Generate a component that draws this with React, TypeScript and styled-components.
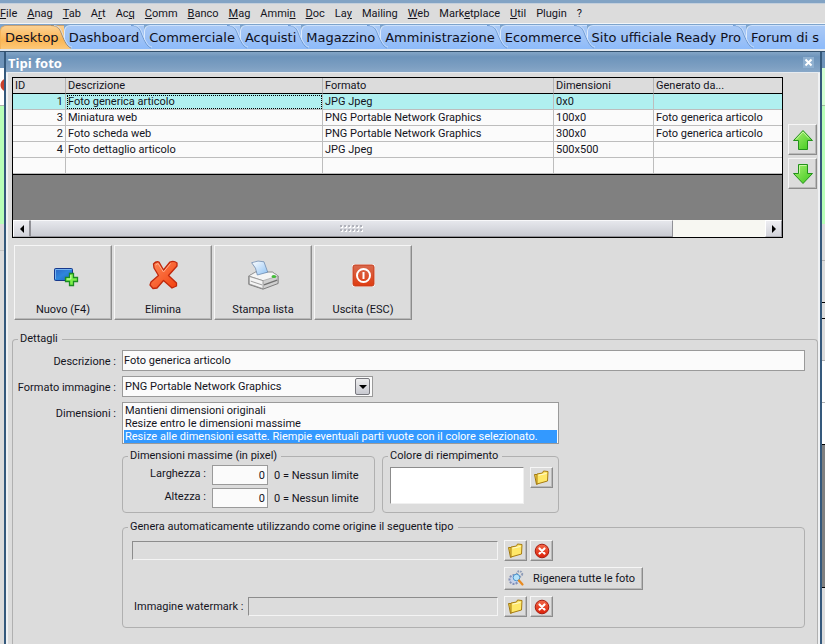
import React from 'react';
import styled, { createGlobalStyle, css } from 'styled-components';

const UI_FONT = 'Roboto, "Noto Sans", sans-serif';
const FACE = '#dcdcdc';

const GlobalStyle = createGlobalStyle`
  *, *::before, *::after { box-sizing: border-box; }
  html, body, #root { height: 100%; }
  body {
    margin: 0;
    overflow: hidden;
    background: ${FACE};
    color: #14141c;
    font: 11px/14px ${UI_FONT};
  }
  button, input, select { font: inherit; color: inherit; border-radius: 0; }
`;

const Page = styled.div`
  display: flex;
  flex-direction: column;
  min-height: 100vh;
  height: 100%;
`;

const TopStrip = styled.div`
  flex: none;
  height: 4px;
  background: #82a3c4;
  border-bottom: 1px solid #c3cfdc;
`;

const MenuBar = styled.nav`
  flex: none;
  display: flex;
  gap: 10px;
  height: 20px;
  background: ${FACE};
  border-bottom: 1px solid #f2f5f8;
  overflow: hidden;
`;

const MenuItem = styled.button`
  flex: none;
  padding: 0;
  border: 0;
  background: none;
  line-height: 20px;
  white-space: nowrap;
  u { text-underline-offset: 1px; }
`;

const TabBar = styled.div`
  flex: none;
  display: flex;
  height: 25px;
  padding-top: 1px;
  background: linear-gradient(#7da3cb, #9dbde0);
  overflow: hidden;
`;

const TabButton = styled.button<{ $active?: boolean }>`
  position: relative;
  flex: none;
  height: 24px;
  margin: 0;
  padding: 0 5px 0 4px;
  border: 0;
  border-top: 1px solid ${p => (p.$active ? '#c9a070' : '#cfe2fb')};
  border-left: 1px solid ${p => (p.$active ? '#f5b45a' : '#dbe9fb')};
  border-top-left-radius: 6px;
  background: ${p =>
    p.$active
      ? 'linear-gradient(#fcd193, #fbb654 60%, #fdc878)'
      : 'linear-gradient(#a9c9f6, #9cc1f6 50%, #8dbbfb)'};
  color: #101020;
  font: 13px/22px "DejaVu Sans", sans-serif;
  text-align: left;
  white-space: nowrap;
  &:last-child { flex: 1 0 auto; }
`;

const TabSlope = styled.svg`
  position: absolute;
  z-index: 1;
  top: -1px;
  left: calc(100% - 13px);
  width: 22px;
  height: 24px;
  pointer-events: none;
`;

const TabLabel = styled.span`
  position: relative;
  z-index: 2;
`;

const Rule = styled.div`
  flex: none;
  height: 3px;
  background: #dfe6ee;
  border-bottom: 1px solid #33506c;
`;

const Workspace = styled.main`
  flex: 1;
  min-height: 0;
  display: flex;
`;

const EdgeColumn = styled.div<{ $width: number }>`
  flex: none;
  width: ${p => p.$width}px;
  display: flex;
  flex-direction: column;
  overflow: hidden;
`;

const EdgeBlock = styled.div<{ $h?: number; $bg: string; $line?: string }>`
  ${p => (p.$h ? css`flex: none; height: ${p.$h}px;` : css`flex: 1;`)}
  background: ${p => p.$bg};
  border-bottom: ${p => (p.$line ? `1px solid ${p.$line}` : '0')};
`;

const Frame = styled.section`
  flex: 1;
  min-width: 0;
  display: flex;
  flex-direction: column;
  border: solid #35597c;
  border-width: 0 2px;
`;

const TitleBar = styled.header`
  flex: none;
  display: flex;
  align-items: center;
  justify-content: space-between;
  height: 21px;
  padding: 0 6px 0 2px;
  background: linear-gradient(#84a5c6, #6d94bb 25%, #7d9fc2 75%, #88a8c8);
  border-bottom: 1px solid #e6ebf0;
`;

const Title = styled.h1`
  margin: 0;
  padding-top: 2px;
  color: #fff;
  font: bold 13px/20px "Open Sans", "Noto Sans", sans-serif;
`;

const CloseButton = styled.button`
  display: grid;
  place-items: center;
  width: 11px;
  height: 11px;
  padding: 0;
  border: 0;
  background: #8fb0d0;
`;

const Body = styled.div`
  flex: 1;
  min-height: 0;
  display: flex;
  flex-direction: column;
  padding: 4px 0 0 4px;
  background: ${FACE};
  border: solid #f0f2f4;
  border-width: 0 2px;
`;

const GridRow = styled.div`
  flex: none;
  display: flex;
  gap: 5px;
  padding-right: 1px;
`;

const GridBox = styled.div`
  flex: 1;
  min-width: 0;
  border: 1px solid #000;
  background: #808080;
`;

const Table = styled.table`
  width: 100%;
  table-layout: fixed;
  border-collapse: separate;
  border-spacing: 0;
  background: #fbfbfb;
  border-bottom: 1px solid #000;
  margin-bottom: 45px;
`;

const Col = styled.col<{ $w?: number }>`
  width: ${p => (p.$w ? `${p.$w}px` : 'auto')};
`;

const Th = styled.th`
  height: 16px;
  padding: 0 2px;
  background: ${FACE};
  border-right: 1px solid #b4b4b4;
  border-bottom: 1px solid #000;
  font-weight: normal;
  text-align: left;
  line-height: 15px;
  &:last-child { border-right: 0; }
`;

const Td = styled.td<{ $right?: boolean; $focus?: boolean }>`
  height: 16px;
  padding: 0 2px;
  border-right: 1px solid #bdbdbd;
  border-bottom: 1px solid #bdbdbd;
  text-align: ${p => (p.$right ? 'right' : 'left')};
  line-height: 15px;
  white-space: nowrap;
  overflow: hidden;
  ${p => p.$focus && css`outline: 1px dotted #000; outline-offset: -2px;`}
  &:last-child { border-right: 0; }
`;

const Tr = styled.tr<{ $selected?: boolean }>`
  background: ${p => (p.$selected ? '#b0f0f0' : '#fbfbfb')};
`;

const ScrollBar = styled.div`
  display: flex;
  height: 17px;
  background: #f7f7f2;
`;

const ScrollButton = styled.button`
  flex: none;
  display: grid;
  place-items: center;
  width: 17px;
  height: 17px;
  padding: 0;
  border: 1px solid #a8a8b0;
  border-color: #fff #909096 #b0b0b6 #fff;
  background: linear-gradient(#eeeef2, #d2d3da);
`;

const ScrollThumb = styled.div`
  flex: 7 1 0;
  display: grid;
  place-items: center;
  border: 1px solid #909096;
  border-top-color: #f8f8fa;
  background: linear-gradient(#e6e7ec, #c9cbd2);
`;

const ScrollTrack = styled.div`
  flex: 1 1 0;
`;

const ArrowColumn = styled.div`
  flex: none;
  display: flex;
  flex-direction: column;
  gap: 3px;
  padding-top: 47px;
`;

const raised = css`
  border: 1px solid;
  border-color: #f6f6f6 #8c8c8c #8c8c8c #f6f6f6;
  background: ${FACE};
  box-shadow: inset -1px -1px 0 #b9b9b9;
`;

const ArrowButton = styled.button`
  ${raised}
  display: grid;
  place-items: center;
  width: 29px;
  height: 31px;
  padding: 0;
`;

const ActionRow = styled.div`
  flex: none;
  display: flex;
  gap: 2px;
  padding: 7px 0 12px 2px;
`;

const ActionButton = styled.button`
  ${raised}
  display: flex;
  flex-direction: column;
  align-items: center;
  justify-content: space-between;
  width: 98px;
  height: 75px;
  padding: 12px 0 2px;
`;

const Group = styled.fieldset`
  margin: 0;
  min-width: 0;
  padding: 0;
  border: 1px solid #b0b0b0;
  border-radius: 4px;
`;

const Legend = styled.legend`
  margin-left: 5px;
  padding: 0 4px 0 2px;
  height: 14px;
  line-height: 14px;
`;

const Details = styled(Group)`
  flex: 1;
  border-bottom: 0;
  border-radius: 4px 4px 0 0;
`;

const DetailsGrid = styled.div`
  display: grid;
  grid-template-columns: 103px minmax(0, 1fr);
  column-gap: 6px;
  row-gap: 5px;
  padding: 4px 12px 0 0;
`;

const FieldLabel = styled.label`
  padding-top: 5px;
  height: 21px;
  text-align: right;
  white-space: nowrap;
`;

const TextInput = styled.input`
  width: 100%;
  height: 21px;
  padding: 0 1px;
  border: 1px solid #9a9a9a;
  background: #fbfbfb;
  outline: 0;
`;

const SelectWrap = styled.div`
  display: grid;
  grid-template-columns: 1fr 17px;
  align-items: center;
  width: 251px;
  border: 1px solid #9a9a9a;
  background: #fbfbfb;
`;

const Select = styled.select`
  grid-area: 1 / 1 / 2 / 3;
  width: 100%;
  height: 19px;
  padding: 0 18px 0 2px;
  border: 0;
  background: none;
  appearance: none;
  outline: 0;
`;

const DropMark = styled.span`
  grid-area: 1 / 2;
  display: grid;
  place-items: center;
  width: 15px;
  height: 17px;
  border: 1px solid #77777d;
  border-radius: 2px;
  background: linear-gradient(#eeeeef, #c8c9d0);
  pointer-events: none;
`;

const ListBox = styled.select`
  display: block;
  width: 437px;
  height: 42px;
  padding: 1px;
  border: 1px solid #9a9a9a;
  background: #fbfbfb;
  outline: 0;
  overflow: hidden;
  option {
    min-height: 13px;
    height: 13px;
    padding: 0 1px;
    line-height: 13px;
  }
  option:checked {
    background: #3399ff linear-gradient(#3399ff, #3399ff);
    -webkit-text-fill-color: #fff;
  }
`;

const Nested = styled.div`
  grid-column: 2;
  display: flex;
  gap: 7px;
`;

const SizeGroup = styled(Group)`
  width: 253px;
  height: 64px;
`;

const FillGroup = styled(Group)`
  width: 177px;
  height: 64px;
`;

const SizeGrid = styled.div`
  display: grid;
  grid-template-columns: 83px 56px 1fr;
  column-gap: 6px;
  row-gap: 3px;
  padding-top: 2px;
`;

const SizeLabel = styled.label`
  text-align: right;
  line-height: 18px;
`;

const SizeInput = styled(TextInput)`
  height: 20px;
  padding: 0 2px;
  text-align: right;
`;

const Hint = styled.span`
  padding-top: 2px;
  line-height: 18px;
  white-space: nowrap;
`;

const FillRow = styled.div`
  display: flex;
  gap: 6px;
  padding: 4px 0 0 7px;
`;

const Swatch = styled.div`
  width: 134px;
  height: 37px;
  border: 1px solid;
  border-color: #8c8c8c #f0f0f0 #f0f0f0 #8c8c8c;
  background: #fff;
`;

const SmallButton = styled.button`
  ${raised}
  flex: none;
  display: grid;
  place-items: center;
  width: 23px;
  height: 21px;
  padding: 0;
`;

const SourceGroup = styled(Group)`
  grid-column: 2;
  height: 108px;
  margin-top: 2px;
`;

const SourceGrid = styled.div`
  display: grid;
  grid-template-columns: 110px 6px 250px auto;
  row-gap: 6px;
  align-items: center;
  justify-content: start;
  padding: 6px 0 0 9px;
`;

const SunkenInput = styled.input<{ $wide?: boolean }>`
  grid-column: ${p => (p.$wide ? '1 / 4' : '3')};
  width: 100%;
  height: 19px;
  border: 1px solid;
  border-color: #8c8c8c #f4f4f4 #f4f4f4 #8c8c8c;
  background: ${FACE};
  outline: 0;
`;

const WatermarkLabel = styled.label`
  grid-column: 1 / 3;
  padding: 0 6px 0 2px;
  text-align: right;
  white-space: nowrap;
`;

const ButtonPair = styled.div`
  grid-column: 4;
  display: flex;
  gap: 3px;
  padding-left: 6px;
`;

const WideButton = styled.button`
  ${raised}
  display: flex;
  align-items: center;
  gap: 8px;
  width: 139px;
  height: 23px;
  padding: 0 3px;
  white-space: nowrap;
`;

const RegenRow = styled.div`
  grid-column: 4;
  padding-left: 6px;
`;

const GreenArrow = ({ down }: { down?: boolean }) => (
  <svg width="22" height="22" viewBox="0 0 22 22" aria-hidden="true">
    <defs>
      <linearGradient id={down ? 'gd' : 'gu'} x1="0" y1="0" x2="1" y2="1">
        <stop offset="0" stopColor="#a8f070" />
        <stop offset="1" stopColor="#3cc81c" />
      </linearGradient>
    </defs>
    <path
      d={down ? 'M6.5 1.5h9v9h5L11 20.5 1.5 10.5h5z' : 'M11 1.5 20.5 11.5h-5v9h-9v-9h-5z'}
      fill={`url(#${down ? 'gd' : 'gu'})`}
      stroke="#22921a"
      strokeLinejoin="round"
    />
    <path d={down ? 'M7.5 10.5v-8h7' : 'M4 10.5 11 3l6 6.5'} fill="none" stroke="#c9f7a4" />
  </svg>
);

const NewIcon = () => (
  <svg width="34" height="34" viewBox="0 0 34 34" aria-hidden="true">
    <defs>
      <linearGradient id="nb" x1="0" y1="0" x2="1" y2="1">
        <stop offset="0" stopColor="#2b62c4" />
        <stop offset="0.5" stopColor="#2e86dc" />
        <stop offset="1" stopColor="#1a60c0" />
      </linearGradient>
    </defs>
    <rect x="8.5" y="10.5" width="18" height="12" rx="1" fill="url(#nb)" stroke="#17388c" />
    <path d="M9.5 21v-9.5h16" fill="none" stroke="#77b3ee" />
    <path d="M23.5 15.5h4v4h4v4h-4v4h-4v-4h-4v-4h4z" fill="#7df04a" stroke="#1c8c22" strokeWidth="1.3" />
    <path d="M24.8 17v4h-4" fill="none" stroke="#d0ffb0" />
  </svg>
);

const DeleteIcon = () => (
  <svg width="34" height="34" viewBox="0 0 34 34" aria-hidden="true">
    <defs>
      <linearGradient id="dx" x1="0" y1="0" x2="1" y2="1">
        <stop offset="0" stopColor="#ff8a5a" />
        <stop offset="1" stopColor="#f2400e" />
      </linearGradient>
    </defs>
    <path
      d="M7.5 6Q10 3 13 4L17.5 12 24 4Q28 2.500 31 5L31 8 22.500 17.500 30.500 25 30.500 28 26 30 17.500 22.500 11 30 7 30.500 4 27 5 24 12.500 17.500 8 10z"
      fill="url(#dx)"
      stroke="#c0280c"
      strokeLinejoin="round"
      strokeWidth="1.3"
    />
    <path d="M9.5 7 12 5.500 17.500 14 24.500 5.500" fill="none" stroke="#ffb090" />
  </svg>
);

const PrinterIcon = () => (
  <svg width="34" height="34" viewBox="-1 -1 36 36" aria-hidden="true">
    <defs>
      <linearGradient id="pp" x1="0" y1="0" x2="1" y2="1">
        <stop offset="0" stopColor="#ffffff" />
        <stop offset="1" stopColor="#8fc2f4" />
      </linearGradient>
    </defs>
    <path d="M2 18 9 14h18l6 4v8l-16 6L2 27z" fill="#cfcfcf" stroke="#777" strokeLinejoin="round" />
    <path d="M2 18 9 14h18l6 4-16 5z" fill="#f5f5f5" stroke="#999" strokeWidth="0.7" />
    <path d="M2.5 18.5 17 23v8.5L2.5 26.5z" fill="#f4f4f4" stroke="#888" strokeWidth="0.8" />
    <path d="M18 27.5 32 22.5" stroke="#707070" strokeWidth="1.5" />
    <path d="M4 23.5 16 27.5" stroke="#999" />
    <path d="M5 4Q12 1 18 3L22 14 11 17Q10 9 5 4z" fill="url(#pp)" stroke="#6a88ac" strokeWidth="0.8" />
    <ellipse cx="28.5" cy="18.5" rx="2.5" ry="1.6" fill="#44bd38" />
  </svg>
);

const PowerIcon = () => (
  <svg width="34" height="34" viewBox="0 0 34 34" aria-hidden="true">
    <defs>
      <linearGradient id="pw" x1="0" y1="0" x2="0" y2="1">
        <stop offset="0" stopColor="#d86a4e" />
        <stop offset="1" stopColor="#e03c10" />
      </linearGradient>
    </defs>
    <rect x="6" y="6" width="23" height="23" rx="3" fill="#fff" />
    <rect x="7" y="7" width="21" height="21" rx="2" fill="url(#pw)" stroke="#c43c1c" />
    <circle cx="17.5" cy="17.5" r="6.5" fill="none" stroke="#fff" strokeWidth="2" />
    <path d="M17.5 14v7" stroke="#fff" strokeWidth="2" />
  </svg>
);

const FolderIcon = () => (
  <svg width="17" height="17" viewBox="0 0 17 17" aria-hidden="true">
    <path d="M1.5 5.5h4l1 8-3 2z" fill="#f5d040" stroke="#a07812" strokeLinejoin="round" />
    <path d="M4 5 9.5 4 10.5 2 15 2.5 14.5 12 4 15z" fill="#ffe868" stroke="#a87c10" strokeLinejoin="round" />
    <path d="M5.5 6.2 13.5 4.5" stroke="#fffbd0" />
  </svg>
);

const RemoveIcon = () => (
  <svg width="16" height="16" viewBox="0 0 16 16" aria-hidden="true">
    <defs>
      <linearGradient id="rm" x1="0" y1="0" x2="0" y2="1">
        <stop offset="0" stopColor="#f26848" />
        <stop offset="1" stopColor="#dc2008" />
      </linearGradient>
    </defs>
    <circle cx="8" cy="8" r="6.8" fill="url(#rm)" stroke="#a81c10" />
    <path d="M5.5 5.5l5 5M10.5 5.5l-5 5" stroke="#fff" strokeWidth="2.2" strokeLinecap="round" />
  </svg>
);

const GearIcon = () => (
  <svg width="17" height="17" viewBox="0 0 17 17" aria-hidden="true">
    <circle cx="11.5" cy="4" r="2.7" fill="none" stroke="#8e9cb8" strokeWidth="2" strokeDasharray="1.6 1" />
    <circle cx="6" cy="9.5" r="4.5" fill="#c6d2ea" stroke="#8290b8" strokeWidth="2" strokeDasharray="2 1.2" />
    <circle cx="8.5" cy="7.5" r="3.3" fill="#b4e2fa" stroke="#4c94cc" />
    <path d="M11 10.5l3.5 4" stroke="#e88a20" strokeWidth="2.2" strokeLinecap="round" />
  </svg>
);

const Triangle = ({ d }: { d: string }) => (
  <svg width="8" height="8" viewBox="0 0 8 8" aria-hidden="true">
    <path d={d} fill="#000" />
  </svg>
);

const Grip = () => (
  <svg width="24" height="7" viewBox="0 0 24 7" aria-hidden="true">
    {[0, 1, 2, 3, 4, 5].flatMap(i =>
      [0, 4].map(y => (
        <g key={`${i}-${y}`}>
          <rect x={i * 4 + 1} y={y + 1} width="2" height="2" fill="#fff" />
          <rect x={i * 4} y={y} width="2" height="2" fill="#b0b2ba" />
        </g>
      )),
    )}
  </svg>
);

const MENU: [string, number][] = [
  ['File', 0], ['Anag', 0], ['Tab', 0], ['Art', 1], ['Acq', 2], ['Comm', 0], ['Banco', 0],
  ['Mag', 0], ['Ammin', 4], ['Doc', 0], ['Lay', 2], ['Mailing', 6], ['Web', 0],
  ['Marketplace', 4], ['Util', 0], ['Plugin', -1], ['?', -1],
];

const TABS = [
  'Desktop', 'Dashboard', 'Commerciale', 'Acquisti', 'Magazzino', 'Amministrazione',
  'Ecommerce', 'Sito ufficiale Ready Pro', 'Forum di s',
];

const ROWS = [
  ['1', 'Foto generica articolo', 'JPG Jpeg', '0x0', ''],
  ['3', 'Miniatura web', 'PNG Portable Network Graphics', '100x0', 'Foto generica articolo'],
  ['2', 'Foto scheda web', 'PNG Portable Network Graphics', '300x0', 'Foto generica articolo'],
  ['4', 'Foto dettaglio articolo', 'JPG Jpeg', '500x500', ''],
  ['', '', '', '', ''],
];

const ACTIONS = [
  { label: 'Nuovo (F4)', icon: <NewIcon /> },
  { label: 'Elimina', icon: <DeleteIcon /> },
  { label: 'Stampa lista', icon: <PrinterIcon /> },
  { label: 'Uscita (ESC)', icon: <PowerIcon /> },
];

const Tab = ({ label, active, last }: { label: string; active?: boolean; last?: boolean }) => (
  <TabButton $active={active} role="tab" aria-selected={!!active}>
    {!last && (
      <TabSlope viewBox="0 0 22 24" aria-hidden="true">
        <defs>
          <linearGradient id={active ? 'ta' : 'ti'} x1="0" y1="0" x2="0" y2="1">
            <stop offset="0" stopColor={active ? '#fcd193' : '#a9c9f6'} />
            <stop offset="0.6" stopColor={active ? '#fbb654' : '#9cc1f6'} />
            <stop offset="1" stopColor={active ? '#fdc878' : '#8dbbfb'} />
          </linearGradient>
        </defs>
        <path d="M0 1C8 1 9 5 11 10S16 23 21 24H0z" fill={`url(#${active ? 'ta' : 'ti'})`} />
        <path d="M0 .5C8 .5 9 5 11 10S16 22 20 23" fill="none" stroke={active ? '#a08a70' : '#6f9bd2'} />
        <path d="M3 .5C9 1 10 5 12 10S17 22 21 22" fill="none" stroke="#d6e6fb" strokeWidth="0.8" />
      </TabSlope>
    )}
    <TabLabel>{label}</TabLabel>
  </TabButton>
);

const PickButtons = () => (
  <ButtonPair>
    <SmallButton aria-label="Sfoglia"><FolderIcon /></SmallButton>
    <SmallButton aria-label="Rimuovi"><RemoveIcon /></SmallButton>
  </ButtonPair>
);

export default function App() {
  return (
    <>
      <GlobalStyle />
      <Page>
        <TopStrip />
        <MenuBar>
          {MENU.map(([text, key]) => (
            <MenuItem key={text}>
              {key < 0 ? text : <>{text.slice(0, key)}<u>{text[key]}</u>{text.slice(key + 1)}</>}
            </MenuItem>
          ))}
        </MenuBar>
        <TabBar role="tablist">
          {TABS.map((t, i) => <Tab key={t} label={t} active={i === 0} last={i === TABS.length - 1} />)}
        </TabBar>
        <Rule />
        <Workspace>
          <EdgeColumn $width={4}>
            <EdgeBlock $h={16} $bg="#6f94ba" />
            <EdgeBlock $h={10} $bg="#fff" />
            <EdgeBlock $h={14} $bg="radial-gradient(circle at 7px 7px, #c8402c 6px, #fff 7px)" />
            <EdgeBlock $h={14} $bg="#fff" $line="#b0b0b0" />
            <EdgeBlock $h={118} $bg="#b8ffb8" />
            <EdgeBlock $h={27} $bg={FACE} $line="#c4c4c4" />
            <EdgeBlock $bg={FACE} />
          </EdgeColumn>
          <Frame>
            <TitleBar>
              <Title>Tipi foto</Title>
              <CloseButton aria-label="Chiudi">
                <svg width="9" height="9" viewBox="0 0 9 9" aria-hidden="true">
                  <path d="M1.5 1.5l6 6M7.5 1.5l-6 6" stroke="#fff" strokeWidth="2" />
                </svg>
              </CloseButton>
            </TitleBar>
            <Body>
              <GridRow>
                <GridBox>
                  <Table>
                    <colgroup>
                      <Col $w={53} /><Col /><Col $w={231} /><Col $w={100} /><Col $w={128} />
                    </colgroup>
                    <thead>
                      <tr>
                        <Th>ID</Th><Th>Descrizione</Th><Th>Formato</Th><Th>Dimensioni</Th><Th>Generato da...</Th>
                      </tr>
                    </thead>
                    <tbody>
                      {ROWS.map((row, r) => (
                        <Tr key={r} $selected={r === 0}>
                          {row.map((cell, c) => (
                            <Td key={c} $right={c === 0} $focus={r === 0 && c === 1}>{cell}</Td>
                          ))}
                        </Tr>
                      ))}
                    </tbody>
                  </Table>
                  <ScrollBar>
                    <ScrollButton aria-label="Scorri a sinistra"><Triangle d="M6 0v8L2 4z" /></ScrollButton>
                    <ScrollThumb><Grip /></ScrollThumb>
                    <ScrollTrack />
                    <ScrollButton aria-label="Scorri a destra"><Triangle d="M2 0v8l4-4z" /></ScrollButton>
                  </ScrollBar>
                </GridBox>
                <ArrowColumn>
                  <ArrowButton aria-label="Sposta su"><GreenArrow /></ArrowButton>
                  <ArrowButton aria-label="Sposta giù"><GreenArrow down /></ArrowButton>
                </ArrowColumn>
              </GridRow>
              <ActionRow>
                {ACTIONS.map(a => (
                  <ActionButton key={a.label}>{a.icon}<span>{a.label}</span></ActionButton>
                ))}
              </ActionRow>
              <Details>
                <Legend>Dettagli</Legend>
                <DetailsGrid>
                  <FieldLabel htmlFor="descr">Descrizione :</FieldLabel>
                  <TextInput id="descr" defaultValue="Foto generica articolo" />
                  <FieldLabel htmlFor="format">Formato immagine :</FieldLabel>
                  <SelectWrap>
                    <Select id="format" defaultValue="png">
                      <option value="png">PNG Portable Network Graphics</option>
                      <option value="jpg">JPG Jpeg</option>
                    </Select>
                    <DropMark><Triangle d="M0 2h8L4 6z" /></DropMark>
                  </SelectWrap>
                  <FieldLabel htmlFor="mode">Dimensioni :</FieldLabel>
                  <ListBox id="mode" size={3} defaultValue="exact">
                    <option value="keep">Mantieni dimensioni originali</option>
                    <option value="max">Resize entro le dimensioni massime</option>
                    <option value="exact">
                      Resize alle dimensioni esatte. Riempie eventuali parti vuote con il colore selezionato.
                    </option>
                  </ListBox>
                  <Nested>
                    <SizeGroup>
                      <Legend>Dimensioni massime (in pixel)</Legend>
                      <SizeGrid>
                        <SizeLabel htmlFor="w">Larghezza :</SizeLabel>
                        <SizeInput id="w" defaultValue="0" />
                        <Hint>0 = Nessun limite</Hint>
                        <SizeLabel htmlFor="h">Altezza :</SizeLabel>
                        <SizeInput id="h" defaultValue="0" />
                        <Hint>0 = Nessun limite</Hint>
                      </SizeGrid>
                    </SizeGroup>
                    <FillGroup>
                      <Legend>Colore di riempimento</Legend>
                      <FillRow>
                        <Swatch />
                        <SmallButton aria-label="Scegli colore"><FolderIcon /></SmallButton>
                      </FillRow>
                    </FillGroup>
                  </Nested>
                  <SourceGroup>
                    <Legend>Genera automaticamente utilizzando come origine il seguente tipo</Legend>
                    <SourceGrid>
                      <SunkenInput $wide aria-label="Tipo di origine" readOnly />
                      <PickButtons />
                      <RegenRow>
                        <WideButton><GearIcon />Rigenera tutte le foto</WideButton>
                      </RegenRow>
                      <WatermarkLabel htmlFor="wm">Immagine watermark :</WatermarkLabel>
                      <SunkenInput id="wm" readOnly />
                      <PickButtons />
                    </SourceGrid>
                  </SourceGroup>
                </DetailsGrid>
              </Details>
            </Body>
          </Frame>
          <EdgeColumn $width={3}>
            <EdgeBlock $h={16} $bg="#6f94ba" />
            <EdgeBlock $h={38} $bg="#d2ffd2" $line="#a0b8a0" />
            <EdgeBlock $h={118} $bg="#b8ffb8" />
            <EdgeBlock $h={37} $bg={FACE} $line="#b0b0b0" />
            <EdgeBlock $h={42} $bg={FACE} $line="#000" />
            <EdgeBlock $h={16} $bg={FACE} $line="#000" />
            <EdgeBlock $h={42} $bg={FACE} $line="#b0b0b0" />
            <EdgeBlock $h={42} $bg="#fff" $line="#b0b0b0" />
            <EdgeBlock $h={42} $bg="#fff" $line="#000" />
            <EdgeBlock $h={143} $bg="#808080" $line="#000" />
            <EdgeBlock $bg={FACE} />
          </EdgeColumn>
        </Workspace>
      </Page>
    </>
  );
}
